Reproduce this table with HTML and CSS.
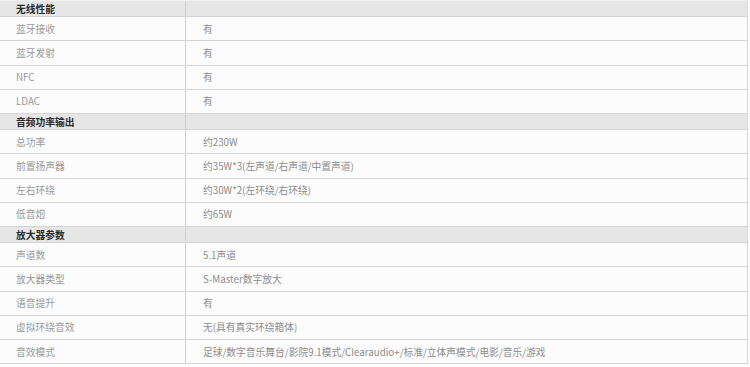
FILE: index.html
```html
<!DOCTYPE html>
<html lang="zh-CN">
<head>
<meta charset="utf-8">
<title>参数</title>
<link rel="stylesheet" href="styles.css">
</head>
<body>
<div class="spec">
  <div class="sec"><div class="c k">无线性能</div><div class="c v"></div></div>
  <div class="row"><div class="c k">蓝牙接收</div><div class="c v">有</div></div>
  <div class="row"><div class="c k">蓝牙发射</div><div class="c v">有</div></div>
  <div class="row"><div class="c k">NFC</div><div class="c v">有</div></div>
  <div class="row"><div class="c k">LDAC</div><div class="c v">有</div></div>

  <div class="sec"><div class="c k">音频功率输出</div><div class="c v"></div></div>
  <div class="row"><div class="c k">总功率</div><div class="c v">约230W</div></div>
  <div class="row"><div class="c k">前置扬声器</div><div class="c v">约35W*3(左声道/右声道/中置声道)</div></div>
  <div class="row"><div class="c k">左右环绕</div><div class="c v">约30W*2(左环绕/右环绕)</div></div>
  <div class="row"><div class="c k">低音炮</div><div class="c v">约65W</div></div>

  <div class="sec"><div class="c k">放大器参数</div><div class="c v"></div></div>
  <div class="row"><div class="c k">声道数</div><div class="c v">5.1声道</div></div>
  <div class="row"><div class="c k">放大器类型</div><div class="c v">S-Master数字放大</div></div>
  <div class="row"><div class="c k">语音提升</div><div class="c v">有</div></div>
  <div class="row"><div class="c k">虚拟环绕音效</div><div class="c v">无(具有真实环绕箱体)</div></div>
  <div class="row"><div class="c k">音效模式</div><div class="c v">足球/数字音乐舞台/影院9.1模式/Clearaudio+/标准/立体声模式/电影/音乐/游戏</div></div>
</div>
</body>
</html>
```

FILE: styles.css
```css
html, body {
  margin: 0;
  padding: 0;
  background: #ffffff;
}

body {
  font-family: "Microsoft YaHei", "Noto Sans CJK SC", "Noto Sans", sans-serif;
  font-size: 9.75px;
  overflow: hidden;
}

.spec {
  width: 747px;
  border-top: 1px solid #f0f0f0;
  border-right: 1px solid #d6d6d6;
  display: flex;
  flex-direction: column;
}

.sec, .row {
  display: grid;
  grid-template-columns: 186px 1fr;
  border-bottom: 1px solid #d4d4d4;
}

.sec {
  height: 15px;
  background: #e6e6e6;
}

.row {
  height: 23.25px;
  background: #fcfcfc;
}

.c {
  display: flex;
  align-items: center;
  white-space: nowrap;
}

.k {
  padding-left: 16px;
  border-right: 1px solid #d2d2d2;
}

.v {
  padding-left: 17px;
}

.sec .k {
  font-weight: bold;
  color: #2a2a2a;
}

.row .k {
  color: #9a9a9a;
}

.row .v {
  color: #8c8c8c;
}
```
